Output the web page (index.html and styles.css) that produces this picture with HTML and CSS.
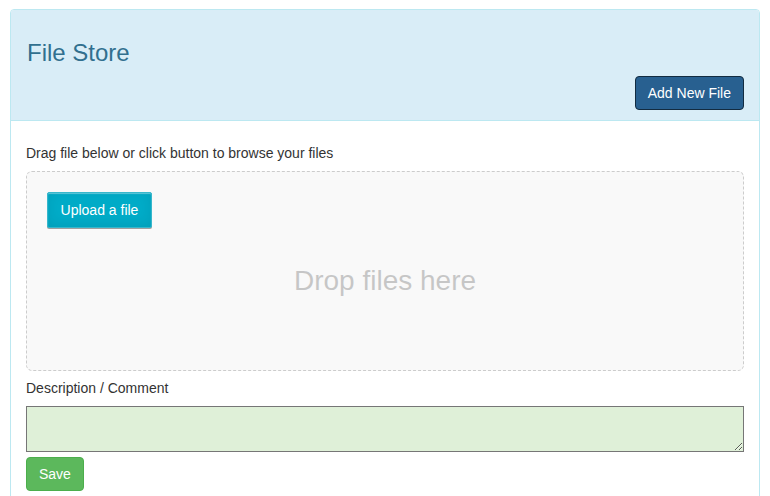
FILE: index.html
```html
<!DOCTYPE html>
<html>
<head>
<meta charset="utf-8">
<link rel="stylesheet" href="styles.css">
</head>
<body>
<div class="panel">
  <div class="panel-heading">
    <h3 class="panel-title">File Store</h3>
    <div class="heading-actions">
      <button class="btn btn-primary">Add New File</button>
    </div>
  </div>
  <div class="panel-body">
    <div class="hint">Drag file below or click button to browse your files</div>
    <div class="drop-zone">
      <div class="upload-button">Upload a file</div>
      <div class="drop-text">Drop files here</div>
    </div>
    <label class="field-label">Description / Comment</label>
    <textarea class="comment"></textarea>
    <div class="actions">
      <button class="btn btn-success">Save</button>
    </div>
  </div>
</div>
</body>
</html>
```
FILE: styles.css
```css
* { box-sizing: border-box; }
html, body { margin: 0; padding: 0; background: #fff; }
body {
  font-family: "Liberation Sans", Arial, sans-serif;
  font-size: 14px;
  line-height: 20px;
  color: #333;
  padding: 9px 10px 0 10px;
}
.panel {
  border: 1px solid #bce8f1;
  border-radius: 4px;
  background: #fff;
}
.panel-heading {
  background: #d9edf7;
  border-bottom: 1px solid #bce8f1;
  border-radius: 3px 3px 0 0;
  padding: 10px 15px;
  display: flex;
  flex-direction: column;
}
.panel-title {
  margin: 20px 0 0 1px;
  font-size: 24px;
  line-height: 26px;
  font-weight: normal;
  color: #31708f;
}
.heading-actions {
  display: flex;
  justify-content: flex-end;
  margin-top: 10px;
}
.btn {
  font-family: "Liberation Sans", Arial, sans-serif;
  font-size: 14px;
  line-height: 20px;
  padding: 6px 12px;
  border: 1px solid transparent;
  border-radius: 4px;
  color: #fff;
  cursor: pointer;
  height: 34px;
}
.btn-primary {
  background: #286090;
  border-color: #122b40;
}
.btn-success {
  background: #5cb85c;
  border-color: #4cae4c;
}
.panel-body {
  padding: 22px 15px 15px 15px;
}
.hint {
  margin-bottom: 8px;
}
.drop-zone {
  position: relative;
  border: 1px dashed #ccc;
  background: #f9f9f9;
  border-radius: 6px;
  padding: 20px;
  height: 200px;
}
.upload-button {
  width: 105px;
  padding: 7px 0;
  text-align: center;
  background: #00abc7;
  border: 1px solid #37b7cc;
  border-radius: 2px;
  color: #fff;
  box-shadow: 0 1px 1px rgba(255,255,255,0.37) inset, 0 1px 0 rgba(0,0,0,0.36), 0 -2px 12px rgba(0,0,0,0.08) inset;
}
.drop-text {
  position: absolute;
  left: 0;
  width: 100%;
  top: 45%;
  text-align: center;
  font-size: 28px;
  line-height: 40px;
  color: #333;
  opacity: 0.25;
}
.field-label {
  display: block;
  margin-top: 7px;
  margin-bottom: 8px;
  font-weight: normal;
}
.comment {
  display: block;
  width: 100%;
  height: 46px;
  margin: 0;
  background: #dff0d8;
  border: 1px solid #767676;
  border-radius: 0;
  font-family: "Liberation Sans", Arial, sans-serif;
  font-size: 14px;
  resize: both;
}
.actions {
  margin-top: 5px;
}
```
